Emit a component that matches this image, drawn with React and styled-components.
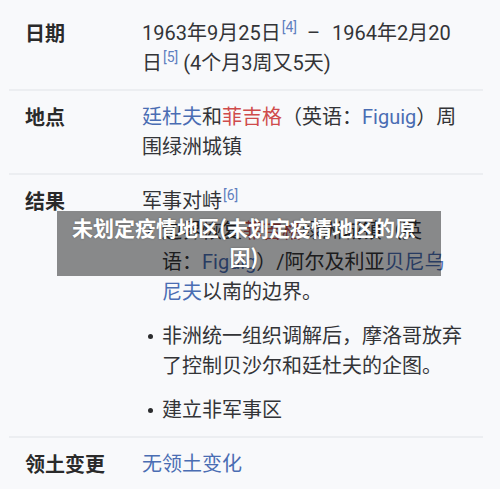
import styled, { createGlobalStyle } from 'styled-components';

const GlobalStyle = createGlobalStyle`
  html, body {
    margin: 0;
    padding: 0;
    background: #f8f9fb;
  }
  body {
    font-family: Roboto, "Noto Sans CJK SC", sans-serif;
    color: #2b2c2e;
  }
`;

const Page = styled.div`
  position: relative;
  width: 500px;
  height: 489px;
  overflow: hidden;
  background: #f8f9fb;
  padding: 7px 17px 0 9px;
  box-sizing: border-box;
`;

const Row = styled.div`
  display: grid;
  grid-template-columns: 117px 1fr;
  padding: 11px 0 11px 16px;
  border-top: ${p => (p.$first ? 'none' : '2px solid #eceef1')};
  font-size: 20px;
  line-height: 30px;
`;

const Label = styled.div`
  font-weight: 700;
  color: #2a2a2a;
  font-family: "Noto Sans CJK SC", sans-serif;
`;

const Value = styled.div`
  color: #333437;
  white-space: nowrap;
`;

const Link = styled.span`
  color: ${p => (p.$red ? '#cf4b4b' : '#4a6db3')};
`;

const Dash = styled.span`
  margin: 0 12px 0 10px;
`;

const Ref = styled.sup`
  font-size: 14px;
  line-height: 0;
  color: #5f7fbf;
  vertical-align: 8px;
  margin-left: 1px;
`;

const List = styled.ul`
  list-style: none;
  margin: 0;
  padding: 0;
`;

const Item = styled.li`
  position: relative;
  padding-left: 20px;
  line-height: 30.5px;
  margin-top: ${p => (p.$first ? '0' : '13px')};

  &::before {
    content: '';
    position: absolute;
    left: 6px;
    top: 13px;
    width: 5px;
    height: 5px;
    border-radius: 50%;
    background: #2b2c2e;
  }
`;

const Overlay = styled.div`
  position: absolute;
  left: 57px;
  top: 211px;
  width: 384px;
  height: 65px;
  box-sizing: border-box;
  padding: 2px 14px 0 4px;
  background: rgba(0, 0, 0, 0.45);
  color: #fff;
  font-family: "Noto Sans CJK SC", sans-serif;
  font-weight: 700;
  font-size: 21px;
  line-height: 29px;
  text-align: center;
  text-shadow: 0 0 2px rgba(0, 0, 0, 0.3);
`;

export default function App() {
  return (
    <>
      <GlobalStyle />
      <Page>
        <Row $first>
          <Label>日期</Label>
          <Value>
            1963年9月25日<Ref>[4]</Ref><Dash>–</Dash>1964年2月20
            <br />
            日<Ref>[5]</Ref> (4个月3周又5天)
          </Value>
        </Row>
        <Row>
          <Label>地点</Label>
          <Value>
            <Link>廷杜夫</Link>和<Link $red>菲吉格</Link>（英语：<Link>Figuig</Link>）周
            <br />
            围绿洲城镇
          </Value>
        </Row>
        <Row>
          <Label>结果</Label>
          <Value>
            军事对峙<Ref>[6]</Ref>
            <List>
              <Item $first>
                边界恢复<Link $red>菲吉格</Link>绿洲城镇（英
                <br />
                语：<Link>Figuig</Link>）/阿尔及利亚<Link>贝尼乌</Link>
                <br />
                <Link>尼夫</Link>以南的边界。
              </Item>
              <Item>
                非洲统一组织调解后，摩洛哥放弃
                <br />
                了控制贝沙尔和廷杜夫的企图。
              </Item>
              <Item>建立非军事区</Item>
            </List>
          </Value>
        </Row>
        <Row>
          <Label>领土变更</Label>
          <Value>
            <Link>无领土变化</Link>
          </Value>
        </Row>
        <Overlay>未划定疫情地区(未划定疫情地区的原因)</Overlay>
      </Page>
    </>
  );
}
